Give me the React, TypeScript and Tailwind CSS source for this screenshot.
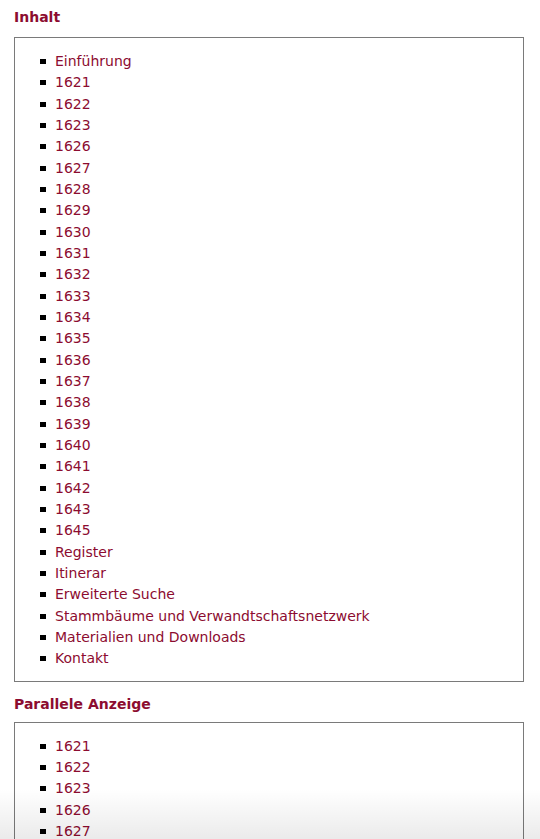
const RED = "text-[#8c0c30]";

const contents = [
  "Einführung",
  "1621", "1622", "1623", "1626", "1627", "1628", "1629", "1630", "1631", "1632",
  "1633", "1634", "1635", "1636", "1637", "1638", "1639", "1640", "1641", "1642",
  "1643", "1645",
  "Register",
  "Itinerar",
  "Erweiterte Suche",
  "Stammbäume und Verwandtschaftsnetzwerk",
  "Materialien und Downloads",
  "Kontakt",
];

const parallel = ["1621", "1622", "1623", "1626", "1627"];

function LinkList({ items }: { items: string[] }) {
  return (
    <ul className="pt-[13px] pb-[11px]">
      {items.map((item) => (
        <li key={item} className="flex h-[21.33px] items-center">
          <span className="ml-[25px] mr-[9px] h-[5px] w-[6px] shrink-0 bg-black" />
          <a href="#" className={`${RED} text-[14px] leading-[21.33px]`}>
            {item}
          </a>
        </li>
      ))}
    </ul>
  );
}

function Section({ title, items, headClass }: { title: string; items: string[]; headClass: string }) {
  return (
    <section>
      <h2 className={`${RED} ${headClass} text-[14px] font-bold leading-[20px]`}>{title}</h2>
      <div className="border border-[#7a7a7a] bg-white">
        <LinkList items={items} />
      </div>
    </section>
  );
}

export default function App() {
  return (
    <div className="relative h-screen overflow-hidden bg-white font-['DejaVu_Sans',Verdana,sans-serif]">
      <div className="flex flex-col gap-[12px] pl-[14px] pr-[16px] pt-[7px]">
        <Section title="Inhalt" items={contents} headClass="mb-[10px]" />
        <Section title="Parallele Anzeige" items={parallel} headClass="mb-[8px]" />
      </div>
      <div className="pointer-events-none absolute inset-x-0 bottom-0 h-[50px] bg-gradient-to-b from-transparent to-black/[0.08]" />
    </div>
  );
}
